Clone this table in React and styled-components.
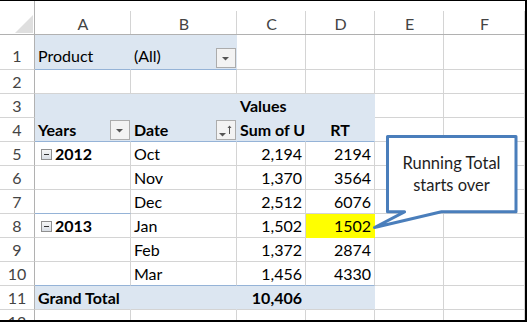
import React from "react";
import styled, { createGlobalStyle } from "styled-components";

const GlobalStyle = createGlobalStyle`
  html, body { margin: 0; padding: 0; background: #fff; }
  body { font-family: Lato, "Open Sans", sans-serif; }
`;

const GRID = "#d4d4d4";
const HDR_LINE = "#b1b1b1";
const PIVOT = "#dce6f1";
const PIVOT_LINE = "#95b3d7";
const YELLOW = "#ffff00";

const Frame = styled.div`
  position: relative;
  width: 527px;
  height: 322px;
  box-sizing: border-box;
  border-top: 1px solid #000;
  border-right: 2px solid #000;
  border-bottom: 2px solid #000;
  overflow: hidden;
  background: #fff;
`;

const Sheet = styled.div`
  display: grid;
  grid-template-columns: 35px 96px 106px 69px 69px 69px 81px;
  grid-template-rows: 34px 35px repeat(10, 24px) 24px;
  font-family: Lato, "Open Sans", sans-serif;
  font-size: 16px;
  line-height: 19px;
  color: #000;
  & > * {
    box-sizing: border-box;
  }
`;

const Corner = styled.div`
  display: flex;
  align-items: flex-end;
  justify-content: flex-end;
  padding: 0 1px 1px 0;
  border-right: 1px solid ${HDR_LINE};
  border-bottom: 1px solid ${HDR_LINE};
  &::before {
    content: "";
    width: 0;
    height: 0;
    border-left: 18px solid transparent;
    border-bottom: 18px solid #dfdfdf;
  }
`;

const ColHead = styled.div`
  display: flex;
  align-items: flex-end;
  justify-content: center;
  padding-bottom: 1px;
  color: #444;
  border-bottom: 1px solid ${HDR_LINE};
  background: linear-gradient(${GRID}, ${GRID}) right bottom / 1px 23px no-repeat;
`;

const RowHead = styled.div`
  display: flex;
  align-items: flex-end;
  justify-content: center;
  padding-bottom: ${(p) => p.$pb}px;
  color: #444;
  border-right: 1px solid ${HDR_LINE};
  border-bottom: 1px solid ${GRID};
`;

const Cell = styled.div`
  display: flex;
  align-items: flex-end;
  justify-content: ${(p) =>
    p.$align === "right" ? "flex-end" : p.$align === "center" ? "center" : "flex-start"};
  padding: 0 ${(p) => (p.$flush ? 0 : 3)}px 0 3px;
  min-width: 0;
  white-space: nowrap;
  overflow: ${(p) => (p.$clip ? "hidden" : "visible")};
  font-weight: ${(p) => (p.$bold ? 700 : 400)};
  background: ${(p) => p.$bg || "#fff"};
  border-right: 1px solid ${(p) => p.$br || p.$bg || GRID};
  border-bottom: 1px solid ${(p) => p.$bb || p.$bg || GRID};
`;

const Label = styled.span`
  display: block;
  padding-bottom: ${(p) => p.$pb}px;
`;

const Toggle = styled.span`
  flex: none;
  width: 11px;
  height: 11px;
  box-sizing: border-box;
  margin: 0 3px 5px 3px;
  border: 1px solid #8f8f8f;
  background: linear-gradient(#f6f6f6, #d9dee5);
  display: flex;
  align-items: center;
  justify-content: center;
  &::after {
    content: "";
    width: 5px;
    height: 1px;
    background: #333;
  }
`;

const DropButton = styled.span`
  flex: none;
  margin-left: auto;
  width: 20px;
  height: 20px;
  box-sizing: border-box;
  margin-bottom: 1px;
  border: 1px solid #acacac;
  background: #f3f3f3;
  display: block;
  & svg {
    display: block;
  }
`;

const FilterButton = ({ sort }) => (
  <DropButton>
    <svg width="18" height="18" viewBox="0 0 18 18">
      {sort ? (
        <>
          <polygon points="2,12 9,12 5.5,15.5" fill="#555" />
          <line x1="12.5" y1="5" x2="12.5" y2="13" stroke="#555" strokeWidth="1" />
          <polygon points="10.5,7 14.5,7 12.5,4.5" fill="#555" />
        </>
      ) : (
        <polygon points="5,8 12,8 8.5,11.5" fill="#555" />
      )}
    </svg>
  </DropButton>
);

const CalloutShape = styled.svg`
  position: absolute;
  left: 0;
  top: -1px;
  width: 527px;
  height: 322px;
  pointer-events: none;
`;

const CalloutText = styled.div`
  position: absolute;
  left: 389px;
  top: 137px;
  width: 125px;
  height: 72px;
  display: flex;
  flex-direction: column;
  align-items: center;
  justify-content: center;
  font-family: Lato, "Open Sans", sans-serif;
  font-size: 16.5px;
  line-height: 22px;
  color: #1e1e1e;
`;

const P = PIVOT;
const PL = PIVOT_LINE;

const columns = ["A", "B", "C", "D", "E", "F"];

const rows = [
  [{ t: "Product", bg: P, bb: PL }, { t: "(All)", bg: P, bb: PL, btn: "filter" }, {}, {}, {}, {}],
  [{}, {}, {}, {}, {}, {}],
  [{ bg: P }, { bg: P }, { t: "Values", b: 1, bg: P }, { bg: P }, {}, {}],
  [
    { t: "Years", b: 1, bg: P, bb: PL, btn: "filter" },
    { t: "Date", b: 1, bg: P, bb: PL, btn: "sort" },
    { t: "Sum of Units", b: 1, bg: P, bb: PL, clip: 1 },
    { t: "RT", b: 1, bg: P, bb: PL, a: "center" },
    {},
    {},
  ],
  [{ t: "2012", b: 1, toggle: 1 }, { t: "Oct" }, { t: "2,194", a: "right" }, { t: "2194", a: "right" }, {}, {}],
  [{}, { t: "Nov" }, { t: "1,370", a: "right" }, { t: "3564", a: "right" }, {}, {}],
  [{ bb: PL }, { t: "Dec" }, { t: "2,512", a: "right" }, { t: "6076", a: "right" }, {}, {}],
  [{ t: "2013", b: 1, toggle: 1 }, { t: "Jan" }, { t: "1,502", a: "right" }, { t: "1502", a: "right", bg: YELLOW }, {}, {}],
  [{}, { t: "Feb" }, { t: "1,372", a: "right" }, { t: "2874", a: "right" }, {}, {}],
  [{ bb: PL }, { t: "Mar", bb: PL }, { t: "1,456", a: "right", bb: PL }, { t: "4330", a: "right", bb: PL }, {}, {}],
  [
    { t: "Grand Total", b: 1, bg: P, bb: GRID },
    { bg: P, bb: GRID },
    { t: "10,406", b: 1, a: "right", bg: P, bb: GRID },
    { bg: P, bb: GRID },
    {},
    {},
  ],
  [{}, {}, {}, {}, {}, {}],
];

export default function App() {
  return (
    <>
      <GlobalStyle />
      <Frame>
        <Sheet>
          <Corner />
          {columns.map((c) => (
            <ColHead key={c}>{c}</ColHead>
          ))}
          {rows.map((cells, ri) => {
            const pb = ri === 0 ? 4 : 2;
            return (
              <React.Fragment key={ri}>
                <RowHead $pb={pb}>{ri + 1}</RowHead>
                {cells.map((c, ci) => (
                  <Cell
                    key={ci}
                    $bg={c.bg}
                    $bb={c.bb}
                    $bold={c.b}
                    $align={c.a}
                    $clip={c.clip}
                    $flush={!!c.btn}
                  >
                    {c.toggle && <Toggle />}
                    {c.t && <Label $pb={pb}>{c.t}</Label>}
                    {c.btn && <FilterButton sort={c.btn === "sort"} />}
                  </Cell>
                ))}
              </React.Fragment>
            );
          })}
        </Sheet>
        <CalloutShape viewBox="0 0 527 322">
          <path
            d="M387.5 136.5 H516 V211.8 H441.5 L374.5 227.5 L404.5 211.8 H387.5 Z"
            fill="#fff"
            stroke="#4a7ebb"
            strokeWidth="3"
            strokeLinejoin="round"
          />
        </CalloutShape>
        <CalloutText>
          <span>Running Total</span>
          <span>starts over</span>
        </CalloutText>
      </Frame>
    </>
  );
}
